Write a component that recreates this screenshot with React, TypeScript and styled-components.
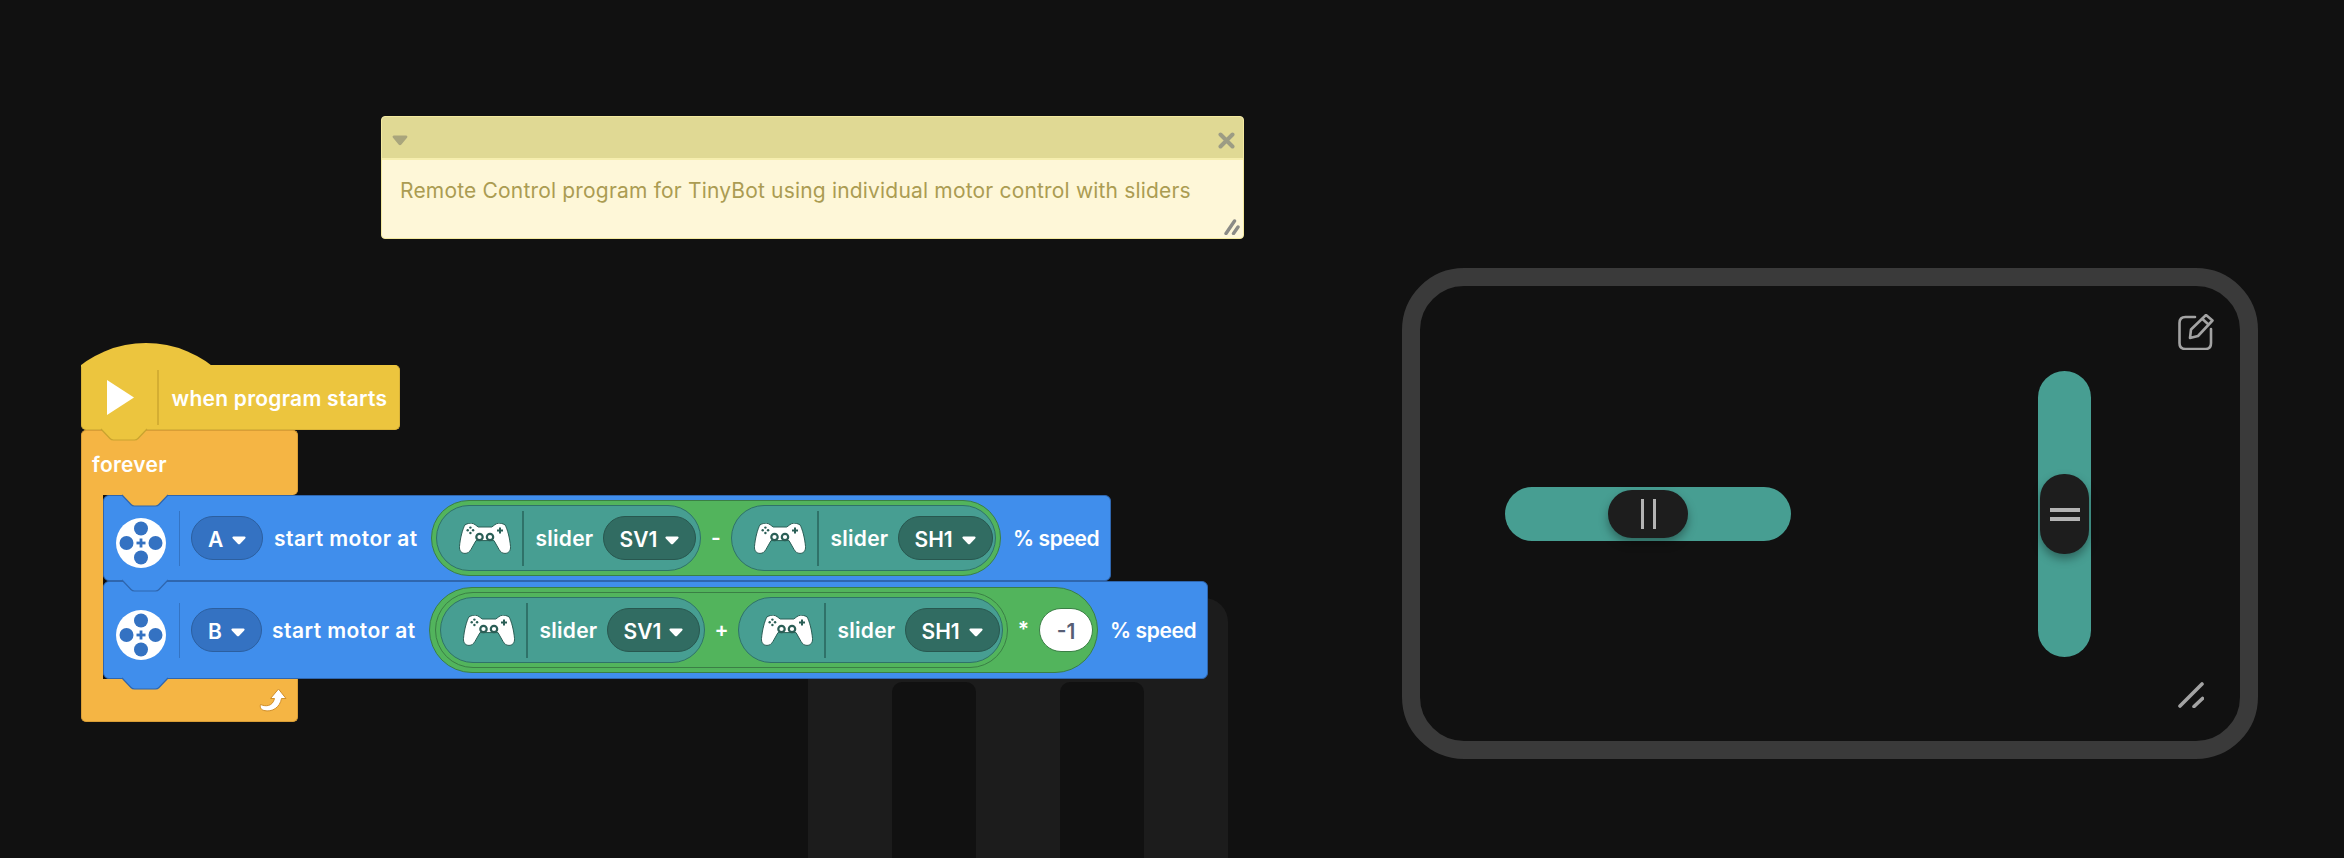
import React from "react";
import styled, { createGlobalStyle } from "styled-components";

const GlobalStyle = createGlobalStyle`
  html, body {
    margin: 0;
    height: 100%;
    background: #111111;
  }
  * {
    box-sizing: border-box;
  }
`;

const FONT = `"Inter", "Liberation Sans", sans-serif`;

const Caret: React.FC = () => (
  <CaretSvg viewBox="0 0 14 9">
    <path d="M1.5 0.5H12.5C13.6 0.5 14 1.6 13.2 2.4L8.2 7.8C7.5 8.5 6.5 8.5 5.8 7.8L0.8 2.4C0 1.6 0.4 0.5 1.5 0.5Z" fill="#fff" />
  </CaretSvg>
);

const Notch: React.FC<{ fill: string; stroke: string; left: number; width?: number }> = ({
  fill,
  stroke,
  left,
  width = 46,
}) => (
  <NotchSvg $left={left} $width={width} viewBox="0 0 46 12">
    <path d="M0 0L9 9.5C10 10.6 11 11 12.5 11H33.5C35 11 36 10.6 37 9.5L46 0Z" fill={fill} />
    <path d="M0 0L9 9.5C10 10.6 11 11 12.5 11H33.5C35 11 36 10.6 37 9.5L46 0" fill="none" stroke={stroke} strokeWidth="1.2" />
  </NotchSvg>
);

const Gamepad: React.FC = () => (
  <GamepadSvg viewBox="0 0 52 32">
    <path
      d="M6 1.8C8.5 0.5 10.7 0 12.7 0.2C15.6 0.6 17.4 3 19.3 4H32.7C34.6 3 36.4 0.6 39.3 0.2C41.3 0 43.5 0.5 46 1.8C48.4 6 50.8 15 51.5 23.4C51.9 27.8 49.4 30.4 46 30.4C43 30.4 41.4 28.8 40 26.4L35 17.6H17L12 26.4C10.6 28.8 9 30.4 6 30.4C2.6 30.4 0.1 27.8 0.5 23.4C1.2 15 3.6 6 6 1.8Z"
      fill="#fff"
      stroke="#2a5e56"
      strokeWidth="1"
    />
    <g fill="none" stroke="#2a5e56" strokeWidth="2.2">
      <circle cx="20.5" cy="14" r="3.2" />
      <circle cx="31" cy="14" r="3.2" />
      <path d="M41 4.5V10.5M38 7.5H44" strokeWidth="2" />
    </g>
    <g fill="#2a5e56">
      <circle cx="11.4" cy="4.6" r="1.2" />
      <circle cx="11.4" cy="10" r="1.2" />
      <circle cx="8.7" cy="7.3" r="1.2" />
      <circle cx="14.1" cy="7.3" r="1.2" />
    </g>
  </GamepadSvg>
);

const Wheel: React.FC = () => (
  <WheelSvg viewBox="0 0 50 50">
    <circle cx="25" cy="25" r="25" fill="#fff" />
    <g fill="#3472c2">
      <circle cx="25" cy="10.5" r="7" />
      <circle cx="25" cy="39.5" r="7" />
      <circle cx="10.5" cy="25" r="7" />
      <circle cx="39.5" cy="25" r="7" />
      <rect x="23.6" y="20.5" width="2.8" height="9" />
      <rect x="20.5" y="23.6" width="9" height="2.8" />
    </g>
  </WheelSvg>
);

const SliderReporter: React.FC<{ name: string; width: number }> = ({ name, width }) => (
  <Reporter>
    <GamepadSlot>
      <Gamepad />
    </GamepadSlot>
    <Divider $color="#2f7269" />
    <Label $ml={12} $width={56}>slider</Label>
    <Dropdown $width={width} $bg="#316c62" $border="#28574f" $ml={11}>
      {name}
      <Caret />
    </Dropdown>
  </Reporter>
);

export default function App() {
  return (
    <>
      <GlobalStyle />
      <Workspace>
        <Trash>
          <TrashBar />
          <TrashSlot />
          <TrashBar />
          <TrashSlot />
          <TrashBar />
        </Trash>

        <Comment>
          <CommentHead>
            <svg width="16" height="11" viewBox="0 0 16 11">
              <path d="M2 0.5H14C15.4 0.5 15.8 1.8 15 2.8L9.4 9.6C8.6 10.6 7.4 10.6 6.6 9.6L1 2.8C0.2 1.8 0.6 0.5 2 0.5Z" fill="#a9a57c" />
            </svg>
            <svg width="17" height="17" viewBox="0 0 17 17">
              <path d="M2.5 2.5L14.5 14.5M14.5 2.5L2.5 14.5" stroke="#9c9c84" strokeWidth="4" strokeLinecap="round" />
            </svg>
          </CommentHead>
          <CommentBody>
            Remote Control program for TinyBot using individual motor control with sliders
            <CommentResize viewBox="0 0 16 16">
              <path d="M2 14.5L10.5 2M9.5 14.5L14 8" stroke="#8b8b86" strokeWidth="3.4" strokeLinecap="round" />
            </CommentResize>
          </CommentBody>
        </Comment>

        <Stack>
          <Hat>
            <svg width="27" height="35" viewBox="0 0 27 35">
              <path d="M0 0L27 17.5L0 35Z" fill="#fff" />
            </svg>
            <Divider $color="#d4ae32" $ml={23} />
            <Label $ml={13} $width={216}>when program starts</Label>
            <Notch fill="#ecc53e" stroke="#c9a42f" left={19} />
          </Hat>

          <ForeverHead>
            <Label>forever</Label>
            <Notch fill="#f5b544" stroke="#2f66ae" left={40} />
          </ForeverHead>
          <ForeverMouth>
            <ForeverArm />
            <MotorColumn>
              <Motor $height={86}>
                <Wheel />
                <Divider $color="#3474c4" $ml={12.5} />
                <Dropdown $width={72} $bg="#3472c2" $border="#2c5f9f" $ml={11}>
                  A
                  <Caret />
                </Dropdown>
                <Label $ml={11} $width={145} $spacing={0.45}>start motor at</Label>
                <MathPill $ml={12}>
                  <SliderReporter name="SV1" width={93} />
                  <Operator $width={30}>-</Operator>
                  <SliderReporter name="SH1" width={95} />
                </MathPill>
                <Label $ml={12} $width={85} $spacing={-0.4}>% speed</Label>
                <Notch fill="#408eec" stroke="#2f66ae" left={18} />
              </Motor>
              <Motor $height={98}>
                <Wheel />
                <Divider $color="#3474c4" $ml={12.5} />
                <Dropdown $width={71} $bg="#3472c2" $border="#2c5f9f" $ml={11}>
                  B
                  <Caret />
                </Dropdown>
                <Label $ml={10} $width={145} $spacing={0.45}>start motor at</Label>
                <MathPill $ml={12} $outer>
                  <MathPill>
                    <SliderReporter name="SV1" width={93} />
                    <Operator $width={33}>+</Operator>
                    <SliderReporter name="SH1" width={95} />
                  </MathPill>
                  <Operator $width={31}>*</Operator>
                  <NumberInput>-1</NumberInput>
                </MathPill>
                <Label $ml={12} $width={85} $spacing={-0.4}>% speed</Label>
                <Notch fill="#408eec" stroke="#2f66ae" left={18} />
              </Motor>
            </MotorColumn>
          </ForeverMouth>
          <ForeverFoot>
            <svg width="28" height="24" viewBox="0 0 28 24">
              <g stroke="#d08f2a" strokeWidth="1" fill="#fff" strokeLinejoin="round">
                <path d="M1.5 16.5C6 18.5 13.5 19 15.5 10.5H11.5L19.5 1L27 10.5H22.5C21 19.5 13 24.5 5 22.5C2.5 21.8 0.5 20 1.5 16.5Z" />
              </g>
            </svg>
          </ForeverFoot>
        </Stack>

        <Phone>
          <EditIcon viewBox="0 0 36 36">
            <path d="M17 3H7.5C3.8 3 1.5 5.3 1.5 9V29C1.5 32.7 3.8 35 7.5 35H27.5C31.2 35 33 32.7 33 29V15" fill="none" stroke="#a3a3a3" strokeWidth="2.6" strokeLinecap="round" />
            <path d="M28 1L34.5 6.5L20 22L12 24L13 15.5Z" fill="none" stroke="#a3a3a3" strokeWidth="2.6" strokeLinejoin="round" />
            <path d="M24.5 5L30.5 10.5" stroke="#a3a3a3" strokeWidth="2.6" />
          </EditIcon>

          <HTrack>
            <HThumb>
              <GripV />
              <GripV />
            </HThumb>
          </HTrack>

          <VTrack>
            <VThumb>
              <GripH />
              <GripH />
            </VThumb>
          </VTrack>

          <ResizeIcon viewBox="0 0 26 26">
            <path d="M2 24L24 2M16 24.5L24.5 16.5" stroke="#a3a3a3" strokeWidth="3.6" strokeLinecap="round" />
          </ResizeIcon>
        </Phone>
      </Workspace>
    </>
  );
}

const Workspace = styled.div`
  position: relative;
  width: 2344px;
  height: 858px;
  overflow: hidden;
  background: #111111;
  font-family: ${FONT};
`;

const Trash = styled.div`
  position: absolute;
  left: 808px;
  top: 598px;
  bottom: 0;
  width: 420px;
  display: grid;
  grid-template-columns: repeat(5, 84px);
  border-radius: 24px 24px 0 0;
  background: #1c1c1c;
  padding-top: 84px;
`;

const TrashBar = styled.div``;

const TrashSlot = styled.div`
  background: #111111;
  border-radius: 10px 10px 0 0;
`;

const Comment = styled.div`
  position: absolute;
  left: 381px;
  top: 116px;
  width: 863px;
  height: 123px;
  display: flex;
  flex-direction: column;
  border: 1px solid #f3e99f;
  border-radius: 4px;
  overflow: hidden;
  background: #fef7d8;
`;

const CommentHead = styled.div`
  height: 43px;
  flex: none;
  display: flex;
  align-items: center;
  justify-content: space-between;
  padding: 6px 8px 0 10px;
  background: #e0d994;
  border-bottom: 2px solid #f6eeae;
`;

const CommentBody = styled.div`
  position: relative;
  flex: 1;
  padding: 17px 18px;
  color: #ab9c52;
  font-size: 21px;
  line-height: 28px;
  letter-spacing: 0.18px;
`;

const CommentResize = styled.svg`
  position: absolute;
  right: 3px;
  bottom: 3px;
  width: 16px;
  height: 16px;
`;

const Stack = styled.div`
  position: absolute;
  left: 81px;
  top: 365px;
  display: flex;
  flex-direction: column;
  align-items: flex-start;
`;

const Hat = styled.div`
  position: relative;
  width: 319px;
  height: 65px;
  display: flex;
  align-items: center;
  padding-left: 25px;
  background: #ecc53e;
  border: 1px solid #d9b338;
  border-top-color: #ecc53e;
  border-radius: 0 5px 5px 5px;

  &::before {
    content: "";
    position: absolute;
    left: -1px;
    top: -23px;
    width: 131px;
    height: 24px;
    background: #ecc53e;
    clip-path: circle(107px at 65px 107px);
  }
`;

const ForeverHead = styled.div`
  position: relative;
  width: 217px;
  height: 65px;
  display: flex;
  align-items: center;
  padding: 2px 0 0 10px;
  background: #f5b544;
  border: 1px solid #d99e36;
  border-bottom: none;
  border-radius: 5px 5px 5px 0;
`;

const ForeverMouth = styled.div`
  display: flex;
`;

const ForeverArm = styled.div`
  width: 22px;
  background: #f5b544;
  border-left: 1px solid #d99e36;
`;

const MotorColumn = styled.div`
  display: flex;
  flex-direction: column;
  align-items: flex-start;
`;

const ForeverFoot = styled.div`
  width: 217px;
  height: 43px;
  display: flex;
  align-items: center;
  justify-content: flex-end;
  padding-right: 10px;
  background: #f5b544;
  border: 1px solid #d99e36;
  border-top: none;
  border-radius: 0 0 5px 5px;
`;

const Motor = styled.div<{ $height: number }>`
  position: relative;
  height: ${(p) => p.$height}px;
  display: flex;
  align-items: center;
  padding: 0 12px;
  background: #408eec;
  border: 1px solid #2f66ae;
  border-radius: 6px;
`;

const WheelSvg = styled.svg`
  width: 50px;
  height: 50px;
  flex: none;
  margin-top: 10px;
`;

const Divider = styled.div<{ $color: string; $ml?: number }>`
  width: 1.5px;
  height: 55px;
  flex: none;
  margin-left: ${(p) => p.$ml ?? 0}px;
  background: ${(p) => p.$color};
`;

const Label = styled.span<{ $ml?: number; $width?: number; $spacing?: number }>`
  flex: none;
  width: ${(p) => (p.$width ? `${p.$width}px` : "auto")};
  margin-left: ${(p) => p.$ml ?? 0}px;
  margin-top: 2px;
  color: #ffffff;
  font-size: 21px;
  font-weight: 600;
  letter-spacing: ${(p) => p.$spacing ?? 0.25}px;
  line-height: 28px;
  white-space: nowrap;
`;

const Dropdown = styled.div<{ $width: number; $bg: string; $border: string; $ml?: number }>`
  width: ${(p) => p.$width}px;
  height: 44px;
  flex: none;
  display: flex;
  align-items: center;
  justify-content: space-between;
  margin-left: ${(p) => p.$ml ?? 0}px;
  padding: 2px 16px 0;
  background: ${(p) => p.$bg};
  border: 1px solid ${(p) => p.$border};
  border-radius: 22px;
  color: #ffffff;
  font-size: 21px;
  font-weight: 600;
`;

const CaretSvg = styled.svg`
  width: 14px;
  height: 9px;
  flex: none;
  margin-top: 2px;
`;

const NotchSvg = styled.svg<{ $left: number; $width: number }>`
  position: absolute;
  left: ${(p) => p.$left}px;
  top: 100%;
  width: ${(p) => p.$width}px;
  height: 12px;
  z-index: 5;
  overflow: visible;
`;

const MathPill = styled.div<{ $ml?: number; $outer?: boolean }>`
  flex: none;
  display: flex;
  align-items: center;
  margin-left: ${(p) => p.$ml ?? 0}px;
  padding: ${(p) => (p.$outer ? "0 4px 0 5px" : "4px")};
  height: ${(p) => (p.$outer ? "86px" : "76px")};
  background: #52b45c;
  border: 1px solid #3a7f45;
  border-radius: 43px;
`;

const Reporter = styled.div`
  width: 265px;
  height: 66px;
  flex: none;
  display: flex;
  align-items: center;
  padding-right: 4px;
  background: #479e92;
  border: 1px solid #2f7269;
  border-radius: 33px;
`;

const GamepadSlot = styled.div`
  width: 85px;
  flex: none;
  display: flex;
  padding-left: 22px;
`;

const GamepadSvg = styled.svg`
  width: 52px;
  height: 32px;
  margin-top: 2px;
`;

const Operator = styled.span<{ $width: number }>`
  width: ${(p) => p.$width}px;
  flex: none;
  text-align: center;
  color: #ffffff;
  font-size: 21px;
  font-weight: 600;
  line-height: 28px;
`;

const NumberInput = styled.div`
  width: 54px;
  height: 44px;
  flex: none;
  display: flex;
  align-items: center;
  justify-content: center;
  padding-top: 2px;
  background: #ffffff;
  border: 1px solid #3a7f45;
  border-radius: 22px;
  color: #575e75;
  font-size: 21px;
  font-weight: 600;
`;

const Phone = styled.div`
  position: absolute;
  left: 1402px;
  top: 268px;
  width: 856px;
  height: 491px;
  border: 18px solid #3a3a3a;
  border-radius: 62px;
  background: #111111;
`;

const EditIcon = styled.svg`
  position: absolute;
  left: 758px;
  top: 28px;
  width: 36px;
  height: 36px;
`;

const ResizeIcon = styled.svg`
  position: absolute;
  left: 758px;
  top: 396px;
  width: 26px;
  height: 26px;
`;

const HTrack = styled.div`
  position: absolute;
  left: 85px;
  top: 201px;
  width: 286px;
  height: 54px;
  background: #479e92;
  border-radius: 27px;
`;

const HThumb = styled.div`
  position: absolute;
  left: 103px;
  top: 3px;
  width: 80px;
  height: 48px;
  display: flex;
  align-items: center;
  justify-content: center;
  gap: 9px;
  background: #1d1d1d;
  border-radius: 24px;
  box-shadow: 0 5px 10px rgba(0, 0, 0, 0.35);
`;

const GripV = styled.div`
  width: 3px;
  height: 30px;
  background: #b3b3b3;
`;

const VTrack = styled.div`
  position: absolute;
  left: 618px;
  top: 85px;
  width: 53px;
  height: 286px;
  background: #479e92;
  border-radius: 27px;
`;

const VThumb = styled.div`
  position: absolute;
  left: 2px;
  top: 103px;
  width: 49px;
  height: 80px;
  display: flex;
  flex-direction: column;
  align-items: center;
  justify-content: center;
  gap: 5px;
  background: #1d1d1d;
  border-radius: 24px;
  box-shadow: 0 5px 10px rgba(0, 0, 0, 0.35);
`;

const GripH = styled.div`
  width: 30px;
  height: 4px;
  background: #b3b3b3;
`;
